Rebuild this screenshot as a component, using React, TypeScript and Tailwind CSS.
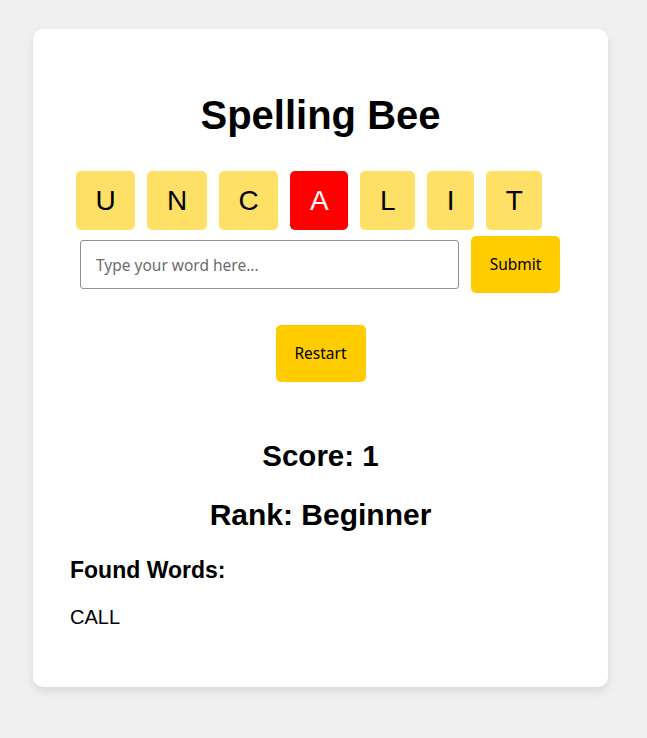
import React from "react";

const letters = ["U", "N", "C", "A", "L", "I", "T"];

export default function App() {
  return (
    <div
      className="min-h-screen bg-[#f0f0f0] pt-[29px] pl-[33px]"
      style={{ fontFamily: '"Liberation Sans", Arial, sans-serif' }}
    >
      <div className="w-[575px] bg-white rounded-[10px] shadow-[0_4px_10px_rgba(0,0,0,0.1)] pt-[63px] pb-[58px] text-black">
        <h1 className="text-center text-[40px] leading-[46px] font-bold">Spelling Bee</h1>
        <div className="mt-[33px] flex gap-[12.25px] pl-[43px]">
          {letters.map((l, i) => (
            <div
              key={i}
              className={
                l === "A"
                  ? "rounded-[5px] bg-[#ff0000] text-white text-[28px] leading-[32px] py-[13.5px] px-[19.5px]"
                  : "rounded-[5px] bg-[#ffe066] text-black text-[28px] leading-[32px] py-[13.5px] px-[19.5px]"
              }
            >
              {l}
            </div>
          ))}
        </div>
        <div className="mt-[6px] flex items-center gap-[12px] pl-[47px]">
          <input
            type="text"
            placeholder="Type your word here..."
            className="w-[379px] h-[49px] border border-[#8f8f9d] rounded-[3px] px-[15px] text-[15.5px] placeholder:text-[#6d6d6d] outline-none"
            style={{ fontFamily: '"Noto Sans", sans-serif' }}
          />
          <button
            className="w-[89px] h-[57px] bg-[#ffcc00] rounded-[5px] text-[15.5px] text-black"
            style={{ fontFamily: '"Noto Sans", sans-serif' }}
          >
            Submit
          </button>
        </div>
        <div className="mt-[32px] flex justify-center">
          <button
            className="w-[90px] h-[57px] bg-[#ffcc00] rounded-[5px] text-[15.5px] text-black"
            style={{ fontFamily: '"Noto Sans", sans-serif' }}
          >
            Restart
          </button>
        </div>
        <h2 className="mt-[57px] text-center text-[29.5px] leading-[34px] font-bold">Score: 1</h2>
        <h2 className="mt-[24.5px] text-center text-[30px] leading-[34px] font-bold">Rank: Beginner</h2>
        <div className="px-[37px]">
          <h3 className="mt-[24.8px] text-[23px] leading-[28px] font-bold">Found Words:</h3>
          <p className="mt-[21.7px] text-[20px] leading-[23px]">CALL</p>
        </div>
      </div>
    </div>
  );
}
